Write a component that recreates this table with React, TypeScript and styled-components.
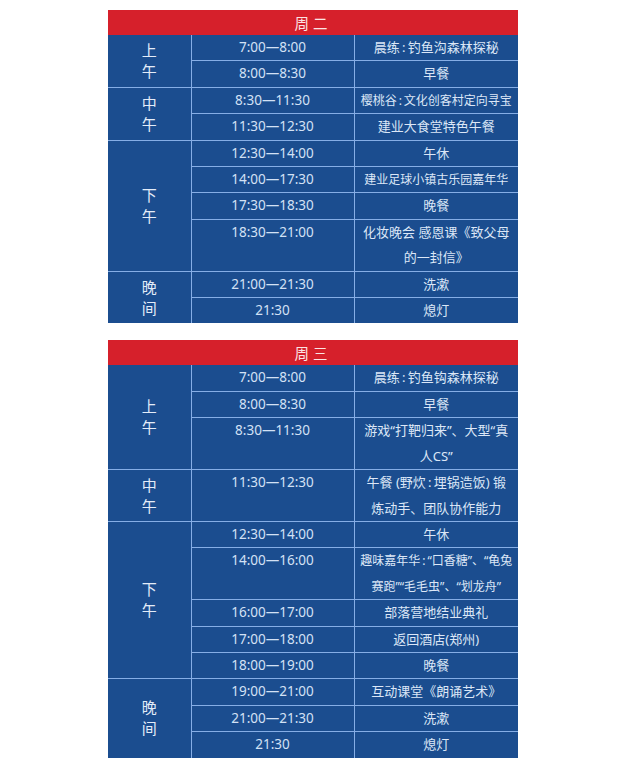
import React from "react";
import styled, { createGlobalStyle } from "styled-components";

const Global = createGlobalStyle`
  html, body { margin: 0; padding: 0; background: #ffffff; }
  body { font-family: "Noto Sans", "Noto Sans CJK SC", sans-serif; }
`;

const Page = styled.div`
  width: 640px;
  min-height: 769px;
  box-sizing: border-box;
  padding: 10px 0 0 108px;
  display: flex;
  flex-direction: column;
  gap: 17px;
  background: #ffffff;
`;

const Table = styled.table`
  width: 410px;
  table-layout: fixed;
  border-collapse: collapse;
  border-style: hidden;
  background: #1b4d8f;
  font-family: "Noto Sans", "Noto Sans CJK SC", sans-serif;
`;

const HeaderCell = styled.th`
  height: 25px;
  padding: 0;
  background: #d6202b;
  color: #fbe4e4;
  font-weight: 400;
  font-size: 14.5px;
  letter-spacing: 4px;
  text-align: center;
  border: 1px solid #d6202b;
  border-bottom-style: hidden;
`;

const Cell = styled.td`
  padding: 0;
  border: 1px solid #86aee6;
  text-align: center;
  color: #dce7f7;
`;

const PeriodCell = styled(Cell)`
  vertical-align: middle;
  font-size: 15px;
  line-height: 21px;
  color: #e3ecf9;
`;

const TimeCell = styled(Cell)`
  vertical-align: top;
  font-size: 13.5px;
  line-height: 25.4px;
  color: #d3e1f5;
`;

const ActivityCell = styled(Cell)<{ $small?: boolean }>`
  vertical-align: top;
  font-size: ${(p) => (p.$small ? "12px" : "13px")};
  line-height: 25.4px;
  white-space: nowrap;
`;

const Line = styled.div`
  display: block;
`;

type Item = { time: string; act: string[]; small?: boolean };
type Group = { period: [string, string]; items: Item[] };
type Day = { title: string; groups: Group[] };

const C = "\u2009:\u2009";

const days: Day[] = [
  {
    title: "周二",
    groups: [
      {
        period: ["上", "午"],
        items: [
          { time: "7:00—8:00", act: [`晨练${C}钓鱼沟森林探秘`] },
          { time: "8:00—8:30", act: ["早餐"] },
        ],
      },
      {
        period: ["中", "午"],
        items: [
          { time: "8:30—11:30", act: [`樱桃谷${C}文化创客村定向寻宝`], small: true },
          { time: "11:30—12:30", act: ["建业大食堂特色午餐"] },
        ],
      },
      {
        period: ["下", "午"],
        items: [
          { time: "12:30—14:00", act: ["午休"] },
          { time: "14:00—17:30", act: ["建业足球小镇古乐园嘉年华"], small: true },
          { time: "17:30—18:30", act: ["晚餐"] },
          { time: "18:30—21:00", act: ["化妆晚会 感恩课《致父母", "的一封信》"] },
        ],
      },
      {
        period: ["晚", "间"],
        items: [
          { time: "21:00—21:30", act: ["洗漱"] },
          { time: "21:30", act: ["熄灯"] },
        ],
      },
    ],
  },
  {
    title: "周三",
    groups: [
      {
        period: ["上", "午"],
        items: [
          { time: "7:00—8:00", act: [`晨练${C}钓鱼钩森林探秘`] },
          { time: "8:00—8:30", act: ["早餐"] },
          { time: "8:30—11:30", act: ["游戏“打靶归来”、大型“真", "人CS”"] },
        ],
      },
      {
        period: ["中", "午"],
        items: [
          { time: "11:30—12:30", act: [`午餐 (野炊${C}埋锅造饭) 锻`, "炼动手、团队协作能力"] },
        ],
      },
      {
        period: ["下", "午"],
        items: [
          { time: "12:30—14:00", act: ["午休"] },
          { time: "14:00—16:00", act: [`趣味嘉年华${C}“口香糖”、“龟兔`, "赛跑”“毛毛虫”、“划龙舟”"], small: true },
          { time: "16:00—17:00", act: ["部落营地结业典礼"] },
          { time: "17:00—18:00", act: ["返回酒店(郑州)"] },
          { time: "18:00—19:00", act: ["晚餐"] },
        ],
      },
      {
        period: ["晚", "间"],
        items: [
          { time: "19:00—21:00", act: ["互动课堂《朗诵艺术》"] },
          { time: "21:00—21:30", act: ["洗漱"] },
          { time: "21:30", act: ["熄灯"] },
        ],
      },
    ],
  },
];

function DayTable({ day }: { day: Day }) {
  return (
    <Table>
      <colgroup>
        <col style={{ width: 83 }} />
        <col style={{ width: 163 }} />
        <col style={{ width: 164 }} />
      </colgroup>
      <thead>
        <tr>
          <HeaderCell colSpan={3}>{day.title}</HeaderCell>
        </tr>
      </thead>
      <tbody>
        {day.groups.map((g, gi) =>
          g.items.map((it, ii) => (
            <tr key={`${gi}-${ii}`}>
              {ii === 0 && (
                <PeriodCell rowSpan={g.items.length}>
                  <Line>{g.period[0]}</Line>
                  <Line>{g.period[1]}</Line>
                </PeriodCell>
              )}
              <TimeCell>{it.time}</TimeCell>
              <ActivityCell $small={it.small}>
                {it.act.map((l, li) => (
                  <Line key={li}>{l}</Line>
                ))}
              </ActivityCell>
            </tr>
          ))
        )}
      </tbody>
    </Table>
  );
}

export default function App() {
  return (
    <>
      <Global />
      <Page>
        {days.map((d) => (
          <DayTable key={d.title} day={d} />
        ))}
      </Page>
    </>
  );
}
